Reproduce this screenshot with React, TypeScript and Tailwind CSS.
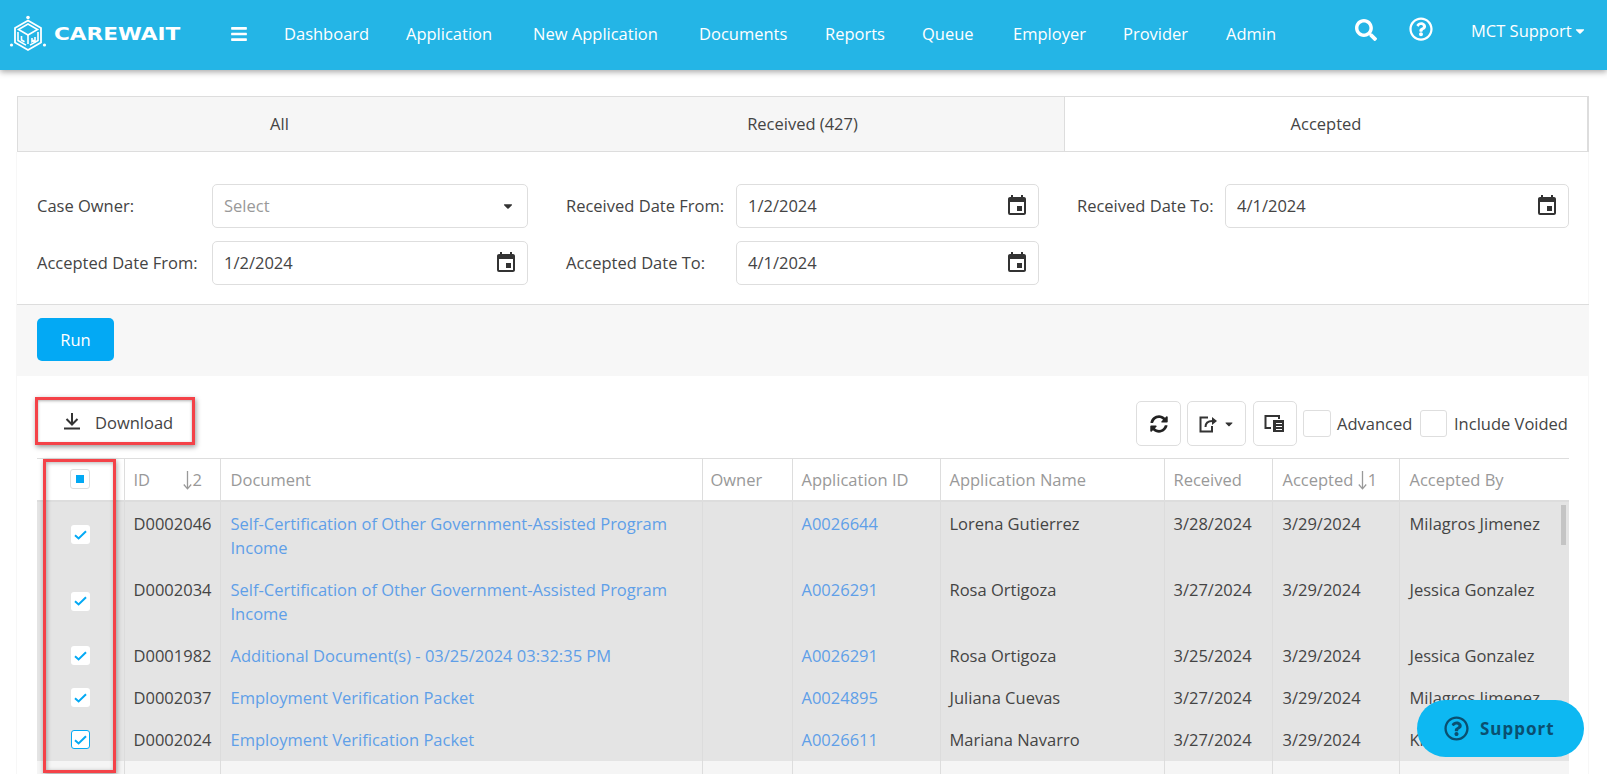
import React from "react";
import { FaBars, FaSearch, FaRegQuestionCircle, FaSyncAlt, FaCaretDown } from "react-icons/fa";
import { MdEvent } from "react-icons/md";

const nav: [string, number][] = [
  ["Dashboard", 122], ["Application", 127], ["New Application", 166], ["Documents", 126], ["Reports", 97],
  ["Queue", 91], ["Employer", 110], ["Provider", 103], ["Admin", 100],
];

type Row = { h: number; pt: number; id: string; doc: string; app: string; name: string; rec: string; by: string; focus?: boolean };
const rows: Row[] = [
  { h: 67, pt: 10, id: "D0002046", doc: "Self-Certification of Other Government-Assisted Program Income", app: "A0026644", name: "Lorena Gutierrez", rec: "3/28/2024", by: "Milagros Jimenez" },
  { h: 67, pt: 10, id: "D0002034", doc: "Self-Certification of Other Government-Assisted Program Income", app: "A0026291", name: "Rosa Ortigoza", rec: "3/27/2024", by: "Jessica Gonzalez" },
  { h: 42, pt: 9, id: "D0001982", doc: "Additional Document(s) - 03/25/2024 03:32:35 PM", app: "A0026291", name: "Rosa Ortigoza", rec: "3/25/2024", by: "Jessica Gonzalez" },
  { h: 42, pt: 9, id: "D0002037", doc: "Employment Verification Packet", app: "A0024895", name: "Juliana Cuevas", rec: "3/27/2024", by: "Milagros Jimenez" },
  { h: 42, pt: 9, id: "D0002024", doc: "Employment Verification Packet", app: "A0026611", name: "Mariana Navarro", rec: "3/27/2024", by: "Kim Lopez", focus: true },
];

function Logo() {
  return (
    <svg width="38" height="38" viewBox="0 0 38 38" fill="none" stroke="white" strokeWidth="1.6">
      <circle cx="19" cy="2.5" r="1.8" fill="white" stroke="none" />
      <circle cx="2.5" cy="30" r="1.6" fill="white" stroke="none" />
      <circle cx="35.5" cy="30" r="1.6" fill="white" stroke="none" />
      <path d="M19 5.5 32 13v14.5L19 35 6 27.5V13Z" strokeWidth="1.8" />
      <path d="M19 9 28.5 14.5 19 20 9.5 14.5Z" />
      <path d="M9 17v8.5l8 4.6M29 17v8.5l-8 4.6M19 20v9" />
      <path d="M12.5 21v4l3 1.8M23 23v3.5l1.5-1 1.5 1V22" />
    </svg>
  );
}

function SortArrow() {
  return (
    <svg width="9" height="19" viewBox="0 0 9 19" fill="none" stroke="#999" strokeWidth="1.3" className="inline-block mr-[1px] align-[-4px]">
      <path d="M4.5 0v17.5M.8 13.5l3.7 4.3 3.7-4.3" />
    </svg>
  );
}

function Field({ children, w }: { children: React.ReactNode; w: string }) {
  return <div className={`${w} h-[44px] flex items-center justify-between pl-[11px] pr-[12px] bg-white border border-[#dedede] rounded-[5px] text-[#444]`}>{children}</div>;
}

function Filter({ label, value, left, top, labelW, w }: { label: string; value: string; left: string; top: string; labelW: string; w: string }) {
  return (
    <div className={`absolute ${left} ${top} flex items-center h-[44px]`}>
      <div className={`${labelW} whitespace-nowrap`}>{label}</div>
      <Field w={w}>
        <span>{value}</span>
        <MdEvent className="text-[#333] text-[24px] -mr-[3px] -mt-[1px]" />
      </Field>
    </div>
  );
}

function Check({ focus }: { focus?: boolean }) {
  return (
    <div className={`mx-auto w-[19px] h-[19px] bg-white rounded-[3px] flex items-center justify-center ${focus ? "border border-[#03a9f4]" : ""}`}>
      <svg width="13" height="10" viewBox="0 0 13 10" fill="none" stroke="#03a9f4" strokeWidth="2"><path d="M1 5.2 4.6 8.4 12 1.2" /></svg>
    </div>
  );
}

export default function App() {
  return (
    <div className="relative w-[1607px] h-[774px] overflow-hidden bg-white text-[16.5px] leading-[24px] text-[#444]" style={{ fontFamily: '"Open Sans", sans-serif' }}>
      {/* Top bar */}
      <header className="relative z-10 h-[70px] bg-[#24b5e6] shadow-[0_2px_6px_rgba(0,0,0,0.35)] text-white flex items-center">
        <div className="ml-[9px] mb-[3px]"><Logo /></div>
        <div className="ml-[7px] w-[176px] font-bold text-[18px] origin-left scale-x-[1.2] mb-[3px]" style={{ fontFamily: '"DejaVu Sans", sans-serif' }}>CAREWAIT</div>
        <FaBars className="text-[18px] -mt-[3px]" />
        <nav className="flex ml-[36px] mt-[-3px]">
          {nav.map(([n, w]) => (
            <div key={n} className="whitespace-nowrap" style={{ width: w }}>{n}</div>
          ))}
        </nav>
        <FaSearch className="absolute left-[1355px] top-[19px] text-[22px]" />
        <FaRegQuestionCircle className="absolute left-[1409px] top-[17px] text-[24px]" />
        <div className="absolute left-[1471px] top-[19px] flex items-center whitespace-nowrap">MCT Support<FaCaretDown className="text-[14px] ml-[1px]" /></div>
      </header>

      {/* Faint page frame */}
      <div className="absolute left-[16px] top-[152px] bottom-0 w-[1573px] border-x border-[#f7f7f7]" />

      {/* Tabs */}
      <div className="absolute left-[17px] top-[96px] w-[1572px] h-[56px] grid grid-cols-3 border border-r-2 border-[#dddddd] bg-[#f6f6f6] text-center">
        <div className="flex items-center justify-center">All</div>
        <div className="flex items-center justify-center">Received (427)</div>
        <div className="flex items-center justify-center bg-white border-l border-[#dddddd]">Accepted</div>
      </div>

      {/* Filters */}
      <div className="absolute left-[37px] top-[184px] flex items-center h-[44px]">
        <div className="w-[175px]">Case Owner:</div>
        <Field w="w-[316px]">
          <span className="text-[#999]">Select</span>
          <FaCaretDown className="text-[14px] text-[#333] -mt-[1px]" />
        </Field>
      </div>
      <Filter left="left-[566px]" top="top-[184px]" labelW="w-[170px]" w="w-[303px]" label="Received Date From:" value="1/2/2024" />
      <Filter left="left-[1077px]" top="top-[184px]" labelW="w-[148px]" w="w-[344px]" label="Received Date To:" value="4/1/2024" />
      <Filter left="left-[37px]" top="top-[241px]" labelW="w-[175px]" w="w-[316px]" label="Accepted Date From:" value="1/2/2024" />
      <Filter left="left-[566px]" top="top-[241px]" labelW="w-[170px]" w="w-[303px]" label="Accepted Date To:" value="4/1/2024" />

      {/* Run band */}
      <div className="absolute left-[17px] top-[304px] w-[1572px] h-[72px] bg-[#f7f7f7] border-t border-[#dddddd] pl-[20px] pt-[13px]">
        <button className="w-[77px] h-[43px] rounded-[5px] bg-[#03a9f4] text-white">Run</button>
      </div>

      {/* Download */}
      <div className="absolute left-[35px] top-[397px] w-[160px] h-[48px] border-[3px] border-[#f44248] shadow-[1px_2px_5px_rgba(0,0,0,0.4),inset_0_1px_3px_rgba(0,0,0,0.3)] flex items-center pl-[25px] pt-[3px]">
        <svg width="18" height="18" viewBox="0 0 18 18" fill="none" stroke="#333" strokeWidth="2" className="-mt-[3px]"><path d="M9 1v10.5M3.5 7 9 12.5 14.5 7M1 16.5h16" /></svg>
        <span className="ml-[14px]">Download</span>
      </div>

      {/* Toolbar */}
      <div className="absolute left-[1136px] top-[401px] w-[45px] h-[45px] border border-[#dedede] rounded-[5px] flex items-center justify-center"><FaSyncAlt className="text-[18px] text-[#222]" /></div>
      <div className="absolute left-[1187px] top-[401px] w-[59px] h-[45px] border border-[#dedede] rounded-[5px] flex items-center justify-center gap-[5px]">
        <svg width="19" height="18" viewBox="0 0 19 18" fill="none" stroke="#333" strokeWidth="2">
          <path d="M9 2.5H1.5V16.5H13V11" />
          <path d="M6.5 12c0-4 2.5-6 7-6" />
          <path d="M13 2 18 6 13 10Z" fill="#333" stroke="none" />
        </svg>
        <FaCaretDown className="text-[12px] text-[#333]" />
      </div>
      <div className="absolute left-[1253px] top-[401px] w-[44px] h-[45px] border border-[#dedede] rounded-[5px] flex items-center justify-center">
        <svg width="22" height="20" viewBox="0 0 22 20" fill="none" stroke="#333" strokeWidth="2">
          <path d="M7 14H1.5V2H15V5" />
          <path d="M9 6h11v12H9Z" fill="#333" stroke="none" />
          <path d="M12 9.5h6M12 12.5h6M12 15.5h6" stroke="white" strokeWidth="1.2" />
        </svg>
      </div>
      <div className="absolute left-[1303px] top-[410px] w-[28px] h-[27px] border border-[#dedede] rounded-[3px]" />
      <div className="absolute left-[1337px] top-[412px]">Advanced</div>
      <div className="absolute left-[1420px] top-[410px] w-[27px] h-[27px] border border-[#dedede] rounded-[3px]" />
      <div className="absolute left-[1454px] top-[412px] whitespace-nowrap">Include Voided</div>

      {/* Table */}
      <table className="absolute left-[37px] top-[458px] w-[1532px] table-fixed border-collapse">
        <colgroup>
          {[87, 96, 482, 90, 148, 224, 108, 127, 170].map((w, i) => <col key={i} style={{ width: w }} />)}
        </colgroup>
        <thead>
          <tr className="h-[42px] text-[#999] text-left border-t border-b-2 border-[#dddddd]">
            <th className="font-normal border-r border-[#dddddd]">
              <div className="mx-auto w-[20px] h-[20px] border border-[#dedede] rounded-[3px] flex items-center justify-center"><div className="w-[8px] h-[8px] bg-[#03a9f4]" /></div>
            </th>
            <th className="font-normal border-r border-[#dddddd] pl-[9px] pt-[2px]"><div className="flex"><span className="w-[49px]">ID</span><span><SortArrow />2</span></div></th>
            <th className="font-normal border-r border-[#dddddd] pl-[10px] pt-[2px]">Document</th>
            <th className="font-normal border-r border-[#dddddd] pl-[8px] pt-[2px]">Owner</th>
            <th className="font-normal border-r border-[#dddddd] pl-[9px] pt-[2px]">Application ID</th>
            <th className="font-normal border-r border-[#dddddd] pl-[9px] pt-[2px]">Application Name</th>
            <th className="font-normal border-r border-[#dddddd] pl-[9px] pt-[2px]">Received</th>
            <th className="font-normal border-r border-[#dddddd] pl-[10px] pt-[2px] whitespace-nowrap">Accepted <SortArrow />1</th>
            <th className="font-normal pl-[10px] pt-[2px]">Accepted By</th>
          </tr>
        </thead>
        <tbody>
          {rows.map((r) => (
            <tr key={r.id} className="bg-[#e4e4e4] align-top" style={{ height: r.h }}>
              <td className="border-r border-[#dcdcdc] align-middle"><Check focus={r.focus} /></td>
              <td className="border-r border-[#dcdcdc] pl-[9px]" style={{ paddingTop: r.pt }}>{r.id}</td>
              <td className="border-r border-[#dcdcdc] pl-[10px] pr-[10px] text-[#5f9fe8]" style={{ paddingTop: r.pt }}>{r.doc}</td>
              <td className="border-r border-[#dcdcdc]" />
              <td className="border-r border-[#dcdcdc] pl-[9px] text-[#5f9fe8]" style={{ paddingTop: r.pt }}>{r.app}</td>
              <td className="border-r border-[#dcdcdc] pl-[9px]" style={{ paddingTop: r.pt }}>{r.name}</td>
              <td className="border-r border-[#dcdcdc] pl-[9px]" style={{ paddingTop: r.pt }}>{r.rec}</td>
              <td className="border-r border-[#dcdcdc] pl-[10px]" style={{ paddingTop: r.pt }}>3/29/2024</td>
              <td className="pl-[10px] whitespace-nowrap" style={{ paddingTop: r.pt }}>{r.by}</td>
            </tr>
          ))}
          <tr className="h-[30px] bg-[#f5f5f5]">
            {[0, 1, 2, 3, 4, 5, 6, 7, 8].map((i) => <td key={i} className={i < 8 ? "border-r border-[#dddddd]" : ""} />)}
          </tr>
        </tbody>
      </table>
      <div className="absolute left-[1561px] top-[505px] w-[5px] h-[40px] bg-[#c4c4c4]" />

      {/* Red selection box */}
      <div className="absolute left-[43px] top-[459px] w-[73px] h-[314px] border-[3px] border-[#f44248] shadow-[1px_2px_5px_rgba(0,0,0,0.35),inset_1px_1px_4px_rgba(0,0,0,0.3)]" />

      {/* Support pill */}
      <div className="absolute left-[1417px] top-[700px] w-[167px] h-[57px] rounded-[29px] bg-[#0db8f2] flex items-center pl-[27px] text-[#0a4f70]">
        <FaRegQuestionCircle className="text-[25px]" />
        <span className="ml-[11px] font-bold text-[17px] tracking-[1px]" style={{ fontFamily: '"Noto Sans", sans-serif' }}>Support</span>
      </div>
    </div>
  );
}
